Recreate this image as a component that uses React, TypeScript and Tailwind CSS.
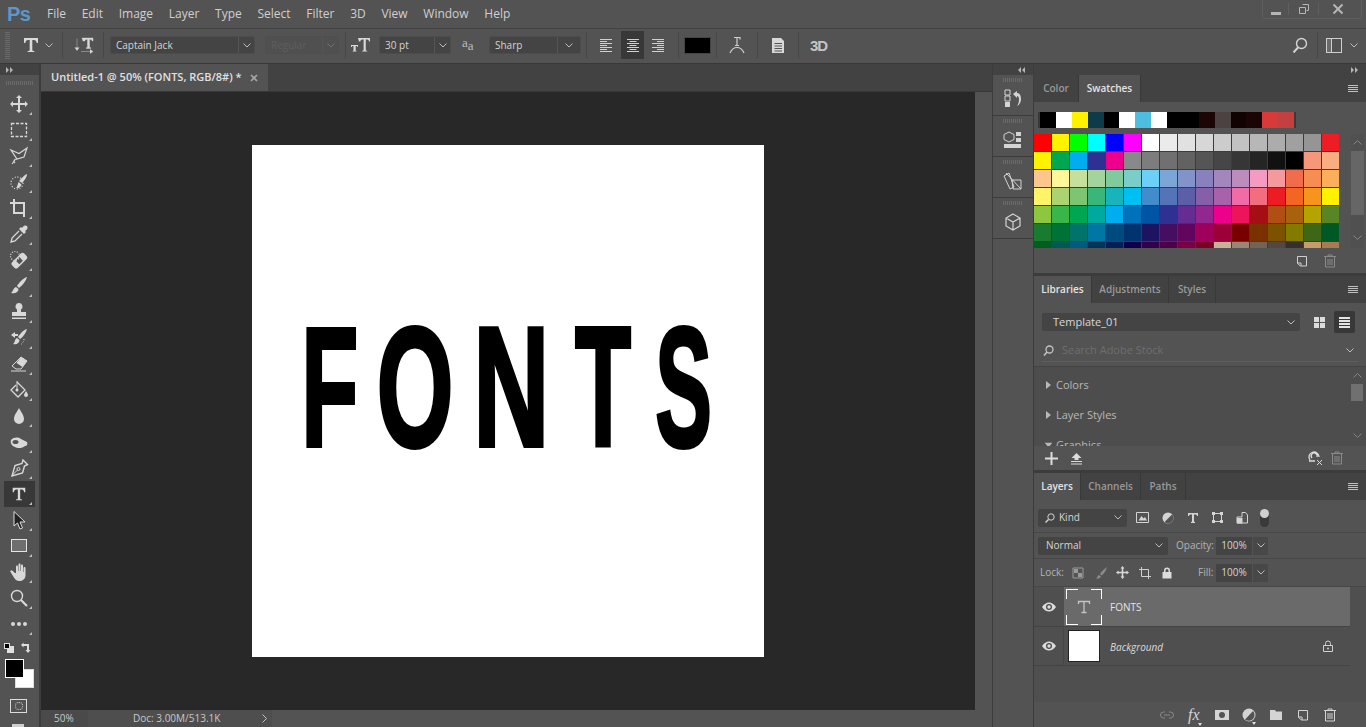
import React from 'react';

const swatchTop = ['#000000','#ffffff','#fff200','#0d3b4a','#000000','#ffffff','#4fbde0','#ffffff','#000000','#000000','#1c0505','#4d4242','#120202','#1a0404','#d83a3a','#c44040'];

const swatches = [
  '#ff0000','#fff200','#00ff00','#00ffff','#0000ff','#ff00ff','#ffffff','#ebebeb','#e1e1e1','#d7d7d7','#cccccc','#c2c2c2','#b7b7b7','#acacac','#a0a0a0','#959595','#ee1c25',
  '#fff200','#00a650','#00aeef','#2e3192','#ec008c','#898989','#7d7d7d','#707070','#626262','#555555','#464646','#363636','#252525','#111111','#000000','#f7977a','#fbad82',
  '#fdc68c','#fff799','#c6df9c','#a4d49d','#81ca9d','#7bcdc9','#6ccff7','#7ca6d8','#8293ca','#8881be','#a286bd','#bc8cbf','#f49bc1','#f5999d','#f16c4d','#f68e54','#fbaf5a',
  '#fff467','#acd372','#7dc473','#39b778','#17b4bb','#00bff3','#438ccb','#5573b7','#5c5fa8','#855fa8','#a763a9','#ef6ca6','#f26d7d','#ed1c24','#f26522','#f7941d','#fff200',
  '#8dc63f','#39b54a','#00a651','#00a99d','#00aeef','#0072bc','#0054a5','#2f3192','#652c91','#91278f','#ec008c','#ed145b','#a50f14','#b14e14','#a8610f','#b5a400','#598527',
  '#197b30','#007236','#00736a','#0076a4','#004a80','#003370','#1d1363','#450e61','#62055f','#9e005c','#9d0039','#790000','#7b3000','#7c5100','#827b00','#3e6617','#005825',
  '#005e20','#005952','#005b7f','#003358','#002056','#0c004b','#30004a','#4b0048','#7a0045','#7a0026','#c7b299','#998675','#736357','#534741','#362f2d','#c69c6d','#a77c50',
];

// canvas letters: each gets its own cell so the widths follow the picture
const canvasLetters = [
  { ch: 'F', cell: 'w-[52px] mr-[23px]', scale: 'scale-x-[0.55]' },
  { ch: 'O', cell: 'w-[72px] mr-[26px]', scale: 'scale-x-[0.58]' },
  { ch: 'N', cell: 'w-[68px] mr-[26px]', scale: 'scale-x-[0.62]' },
  { ch: 'T', cell: 'w-[64px] mr-[22px]', scale: 'scale-x-[0.54]' },
  { ch: 'S', cell: 'w-[54px]', scale: 'scale-x-[0.5]' },
];

const Ico: React.FC<{ s?: number; children: React.ReactNode; className?: string }> = ({ s = 20, children, className = '' }) => (
  <svg width={s} height={s} viewBox={`0 0 ${s} ${s}`} fill="currentColor" className={`shrink-0 ${className}`}>{children}</svg>
);

const Chevron = ({ className = '' }: { className?: string }) => (
  <svg width="8" height="5" viewBox="0 0 8 5" fill="none" stroke="currentColor" className={`shrink-0 text-[#bdbdbd] ${className}`}><path d="M.5.5 4 4 7.5.5" /></svg>
);

const Burger = () => (
  <svg width="10" height="7" viewBox="0 0 10 7" className="text-[#c0c0c0]" fill="currentColor"><path d="M0 0h10v1H0zM0 2h10v1H0zM0 4h10v1H0zM0 6h10v1H0z" /></svg>
);

const Sep = ({ className = '' }: { className?: string }) => <div className={`w-px h-[26px] bg-[#474747] shrink-0 ${className}`} />;

const Arrows = ({ left }: { left?: boolean }) => (
  <svg width="7" height="6" viewBox="0 0 7 6" fill="currentColor" className="text-[#b5b5b5]">
    {left ? <path d="M3 0v6L0 3zM7 0v6L4 3z" /> : <path d="M0 0v6l3-3zM4 0v6l3-3z" />}
  </svg>
);

const Grip = ({ className = '' }: { className?: string }) => (
  <div className={`h-[4px] shrink-0 bg-[repeating-linear-gradient(90deg,#6a6a6a_0_1px,transparent_1px_2px)] ${className}`} />
);

const Trash = ({ className = '' }: { className?: string }) => (
  <Ico s={14} className={className}>
    <path d="M1 2.500h12M5 2V1h4v1M2.500 3v10h9V3M5 5v6M7 5v6M9 5v6" fill="none" stroke="currentColor" />
  </Ico>
);

const NewDoc = () => (
  <Ico s={14}>
    <path d="M2.500 2.500h9v7l-3 2.500h-6zM8 12V9h3.500" fill="none" stroke="currentColor" transform="matrix(-1 0 0 1 14 0)" />
  </Ico>
);

const Eye = () => (
  <Ico s={14}>
    <path d="M0 7c2-3 4.500-4.500 7-4.500S12 4 14 7c-2 3-4.500 4.500-7 4.500S2 10 0 7z" />
    <circle cx="7" cy="7" r="3" fill="#4a4a4a" />
    <circle cx="7" cy="7" r="1.700" />
  </Ico>
);

const SerifT = ({ s = 20 }: { s?: number }) => (
  <svg width={s} height={s} viewBox="0 0 20 20" fill="currentColor" className="shrink-0">
    <path d="M3 3h14v5h-1.300c-.3-2-1-3-3-3H11.300v10c0 .8.6 1 2 1v1H6.700v-1c1.400 0 2-.2 2-1V5H7.300c-2 0-2.700 1-3 3H3z" />
  </svg>
);

const line = { fill: 'none', stroke: 'currentColor' } as const;

const tools: { icon: React.ReactNode; active?: boolean; plain?: boolean }[] = [
  { icon: <path d="M10 1l3 3h-2v5h5V7l3 3-3 3v-2h-5v5h2l-3 3-3-3h2v-5H4v2l-3-3 3-3v2h5V4H7z" /> },
  { icon: <rect x="2.500" y="3.500" width="15" height="13" {...line} strokeDasharray="3 1.500" strokeWidth="1.300" /> },
  { icon: <path d="M2 4l8 3.500L18 2l-3 9-7 2zM8 13c-3 0-4 2-2 4M6 14l-3 4" {...line} strokeWidth="1.200" /> },
  { icon: <><circle cx="8" cy="11" r="6" {...line} strokeDasharray="1 1.800" strokeWidth="1.300" /><path d="M18 2c0 3-3 7-5 9l-3-2c2-2 5-6 8-7zM9.500 10l3 2.500c-1 3-3 4-5.500 3.500 1.500-1 1.500-4 2.500-6z" /></> },
  { icon: <><path d="M5 1v14h11M1 5h14v14" {...line} strokeWidth="2" /></> },
  { icon: <><path d="M16 1.500a2.300 2.300 0 0 1 2.500 2.500c0 1-1 2-2.500 3l1 1-2 2-5-5 2-2 1 1c1-1.500 2-2.500 3-2.500z" /><path d="M10 7l-7 7-1 4 4-1 7-7" {...line} strokeWidth="1.300" /></> },
  { icon: <><g transform="rotate(-45 10 11)"><rect x="2" y="7" width="17" height="8" rx="2.500" /><rect x="8" y="8.500" width="5" height="5" fill="#535353" /></g><circle cx="6" cy="6" r="4.500" {...line} strokeDasharray="1 1.500" strokeWidth="1.200" /></> },
  { icon: <path d="M18 1c-1 4-5 9-8 11l-2-2c2-3 6-8 10-9zM7 11l2.500 2c0 3-3 5-7.500 4 2-1 2-5 5-6z" /> },
  { icon: <path d="M10 1a3.500 3.500 0 0 1 2 6.400V10h5v4H3v-4h5V7.400A3.500 3.500 0 0 1 10 1zM3 15.500h14V17H3z" /> },
  { icon: <><path d="M18 1c-1 4-4 8-7 10l-2-2c2-3 5-7 9-8zM8 10l2.500 2c0 3-3 5-6.500 4 2-1 1.500-5 4-6z" /><path d="M2 7l4-3v2h3v2H6v2z" /><path d="M15 11c0 3-2 5-4 6" {...line} strokeDasharray="1 1.500" /></> },
  { icon: <><path d="M12 3l6 4-6 8H7l-4-3z" {...line} /><path d="M12 3l6 4-4.500 6L7.500 9z" /><path d="M2 17h15" {...line} /></> },
  { icon: <><path d="M8 2l8 8-7 7-7-7 5-5" {...line} strokeWidth="1.300" /><path d="M8 9V1" {...line} /><path d="M17 11c1.200 2 2 3 2 4a2 2 0 0 1-4 0c0-1 1-2 2-4z" /><circle cx="8" cy="10" r="1.500" /></> },
  { icon: <path d="M10 2c2 4 5 7 5 11a5 5 0 0 1-10 0c0-4 3-7 5-11z" /> },
  { icon: <><path d="M2 8c3-3 7-3 10-1l6 3c1 2 0 4-2 4-2 2-7 3-10 1-3-1-5-4-4-7z" /><ellipse cx="6.500" cy="10" rx="3" ry="2" fill="#535353" /></> },
  { icon: <><path d="M14 2l4.500 4.500-3 1.500-2 7-10.500 3 3-10.500 7-2z" {...line} strokeWidth="1.400" /><path d="M3 17.500l5.500-5.500" {...line} /><circle cx="9.500" cy="11" r="1.500" {...line} /></> },
  { icon: <SerifT s={18} />, active: true, plain: true },
  { icon: <path d="M5 1.500L16 12h-5l2.500 6-2.500 1-2.500-6L5 16z" fill="#222" stroke="#dcdcdc" /> },
  { icon: <rect x="2.500" y="3.500" width="15" height="12" fill="#6e6e6e" stroke="#e4e4e4" /> },
  { icon: <path d="M7 4.500c0-1.500 2-1.500 2 0V9h.500V2.500c0-1.500 2-1.500 2 0V9h.500V3.500c0-1.500 2-1.500 2 0V10h.500V6c0-1.500 2-1.500 2 0v7c0 4-3 6-6 6s-5-2-6.500-5L1.500 10c-.8-1.500 1-2.500 2-1.300L6 11h1z" /> },
  { icon: <><circle cx="8" cy="8" r="5.500" {...line} strokeWidth="1.400" /><path d="M12 12l6 6" {...line} strokeWidth="2.200" /></> },
  { icon: <><circle cx="4" cy="10" r="2" /><circle cx="10" cy="10" r="2" /><circle cx="16" cy="10" r="2" /></> },
];

const Tool = ({ icon, active, plain }: { icon: React.ReactNode; active?: boolean; plain?: boolean }) => (
  <div className={`relative mx-[4px] w-[31px] h-[26px] flex items-center justify-center pr-[2px] text-[#d8d8d8] ${active ? 'bg-[#383838]' : ''}`}>
    {plain ? icon : <Ico>{icon}</Ico>}
    <div className="absolute right-[3px] bottom-[2px] w-0 h-0 border-l-[3px] border-l-transparent border-b-[3px] border-b-[#c0c0c0]" />
  </div>
);

const Select = ({ label, w, chevW = 16, disabled, text = 'text-[#d4d4d4]' }: { label: string; w: number; chevW?: number; disabled?: boolean; text?: string }) => (
  <div className={`flex h-[18px] items-center rounded-[2px] border ${disabled ? 'border-[#4f4f4f] bg-[#505050]' : 'border-[#4c4c4c] bg-[#444444]'} shrink-0`} style={{ width: w }}>
    <span className={`flex-1 pl-[5px] text-[10px] leading-[16px] whitespace-nowrap ${text}`}>{label}</span>
    <div className="h-full flex items-center justify-center border-l border-[#555555]" style={{ width: chevW }}>
      <Chevron className={disabled ? 'opacity-30' : ''} />
    </div>
  </div>
);

const PanelTabs = ({ tabs, active }: { tabs: { name: string; w: number }[]; active: string }) => (
  <div className="h-[27px] flex bg-[#424242] shrink-0">
    {tabs.map((t) => (
      <div
        key={t.name}
        className={`flex items-center justify-center border-r border-[#383838] text-[10px] font-semibold ${t.name === active ? 'bg-[#535353] text-[#e4e4e4]' : 'text-[#999999]'}`}
        style={{ width: t.w }}
      >
        {t.name}
      </div>
    ))}
    <div className="ml-auto mr-[8px] self-center"><Burger /></div>
  </div>
);

const ScrollArrow = ({ up }: { up?: boolean }) => (
  <svg width="9" height="5" viewBox="0 0 9 5" fill="none" stroke="currentColor" className={`text-[#858585] ${up ? 'rotate-180' : ''}`}><path d="M.5.5l4 4 4-4" /></svg>
);

const ListRow = ({ label, open }: { label: string; open?: boolean }) => (
  <div className="h-[30px] flex items-center pl-[12px] gap-[5px] text-[#b8b8b8] text-[11px] shrink-0">
    <svg width="5" height="8" viewBox="0 0 5 8" fill="currentColor" className={open ? 'rotate-90' : ''}><path d="M0 0l5 4-5 4z" /></svg>
    {label}
  </div>
);

const Dropped = () => <div className="absolute -bottom-[3px] right-0 w-0 h-0 border-x-[2px] border-x-transparent border-t-[3px] border-t-[#e0e0e0]" />;

export default function App() {
  return (
    <div className="w-[1366px] h-[727px] overflow-hidden flex flex-col bg-[#535353] font-['Open_Sans','Noto_Sans',sans-serif] text-[#d4d4d4]">
      {/* Menu bar */}
      <div className="h-[29px] shrink-0 flex items-start border-b border-[#424242]">
        <div className="w-[47px] pl-[7px] pt-[2px] text-[20px] leading-[24px] font-bold text-[#5d97c8] font-['Liberation_Sans',sans-serif] tracking-[-0.5px]">Ps</div>
        <div className="flex gap-[15.7px] h-[28px] items-center text-[12px] text-[#d0d0d0]">
          {['File', 'Edit', 'Image', 'Layer', 'Type', 'Select', 'Filter', '3D', 'View', 'Window', 'Help'].map((m) => <span key={m}>{m}</span>)}
        </div>
        <div className="ml-auto mr-[4px] w-[100px] h-[19px] flex items-center border-b border-l border-r border-[#5f5f5f] rounded-b-[2px] text-[#b5b5b5]">
          <div className="w-[25px] flex justify-center pt-[3px]"><div className="w-[10px] h-[3px] bg-[#b5b5b5] mt-[6px]" /></div>
          <div className="w-[30px] flex justify-center border-l border-[#5f5f5f]">
            <Ico s={12}><path d="M4.500 1.500h6v6h-2M1.500 4.500h6v6h-6z" fill="none" stroke="currentColor" /></Ico>
          </div>
          <div className="flex-1 flex justify-center pr-[5px] border-l border-[#5f5f5f]">
            <Ico s={12}><path d="M1.500 1.500l9 9M10.500 1.500l-9 9" fill="none" stroke="currentColor" strokeWidth="2" /></Ico>
          </div>
        </div>
      </div>

      {/* Options bar */}
      <div className="h-[35px] shrink-0 flex items-center pb-[2px] border-b border-[#383838] text-[#d4d4d4]">
        <div className="ml-[5px] w-[5px] h-[27px] bg-[repeating-linear-gradient(0deg,#6a6a6a_0_1px,transparent_1px_2px)]" />
        <div className="ml-[11px] text-[#dadada]"><SerifT /></div>
        <Chevron className="ml-[4px]" />
        <Sep className="ml-[9px]" />
        <div className="ml-[11px] text-[#d8d8d8]">
          <Ico><path d="M8 3h11v3h-.8c-.2-1-.7-1.500-1.700-1.500h-1V12c0 .5.4.7 1.200.7v.8h-4.400v-.8c.8 0 1.200-.2 1.200-.7V4.500h-1c-1 0-1.500.5-1.700 1.500H9zM3 3.500V15M.8 12.500L3 15.500l2.200-3M7 16.500h11M16 14.500l3 2-3 2" fill="currentColor" stroke="currentColor" strokeWidth=".4" /></Ico>
        </div>
        <Sep className="ml-[9px]" />
        <div className="ml-[6px]"><Select label="Captain Jack" w={145} /></div>
        <div className="ml-[10px]"><Select label="Regular" w={74} disabled text="text-[#5e5e5e]" /></div>
        <Sep className="ml-[6px]" />
        <div className="ml-[4px] text-[#d8d8d8] w-[21px]">
          <Ico s={21}><path d="M8 3h12v3.500h-.9c-.2-1.300-.8-2-2-2h-1.300V15c0 .6.5.8 1.400.8v.7h-5v-.7c.9 0 1.400-.2 1.400-.8V4.500h-1.300c-1.200 0-1.800.7-2 2H9zM1 10h7v2h-.6c-.1-.7-.4-1.100-1.100-1.100h-.6V15.500c0 .3.3.4.8.4v.6H2.700v-.6c.5 0 .8-.1.8-.4V10.900h-.6c-.7 0-1 .4-1.100 1.100H1z" /></Ico>
        </div>
        <div className="ml-[8px]"><Select label="30 pt" w={72} /></div>
        <div className="ml-[11px] w-[18px] text-[#bbbbbb] text-[13px] leading-none font-['Liberation_Serif',serif]"><span className="relative -top-[3px]">a</span><span>a</span></div>
        <div className="ml-[9px]"><Select label="Sharp" w={92} chevW={23} /></div>
        <Sep className="ml-[5px]" />
        <div className="ml-[12px] w-[14px] text-[#d0d0d0]"><Ico s={14}><path d="M1 1h12v1H1zM1 3h7v1H1zM1 5h12v1H1zM1 7h7v1H1zM1 9h12v1H1zM1 11h7v1H1zM1 13h12v1H1z" /></Ico></div>
        <div className="ml-[8px] w-[23px] h-[28px] bg-[#383838] flex items-center justify-center text-[#d0d0d0]"><Ico s={14}><path d="M1 1h12v1H1zM3.500 3h7v1h-7zM1 5h12v1H1zM3.500 7h7v1h-7zM1 9h12v1H1zM3.500 11h7v1h-7zM1 13h12v1H1z" /></Ico></div>
        <div className="ml-[7px] w-[14px] text-[#d0d0d0]"><Ico s={14}><path d="M1 1h12v1H1zM6 3h7v1H6zM1 5h12v1H1zM6 7h7v1H6zM1 9h12v1H1zM6 11h7v1H6zM1 13h12v1H1z" /></Ico></div>
        <Sep className="ml-[13px]" />
        <div className="ml-[5px] w-[27px] h-[17px] bg-black border border-[#444444]" />
        <Sep className="ml-[5px]" />
        <div className="ml-[10px] text-[#cfcfcf]"><Ico><path d="M7 2.500h6v2M10 2.500v8M8 10.500h4M3 18c1.500-3.500 4-5.500 7-5.500s5.500 2 7 5.500" fill="none" stroke="currentColor" strokeWidth="1.200" /></Ico></div>
        <Sep className="ml-[10px]" />
        <div className="ml-[12px] text-[#d8d8d8]"><Ico s={16}><path d="M2 1h9l3 3v12H2zM4.500 6v1H12V6zM4.500 8.500v1H12v-1zM4.500 11v1H12v-1zM4.500 13.500v1H12v-1z" fillRule="evenodd" /></Ico></div>
        <Sep className="ml-[12px]" />
        <div className="ml-[11px] w-[20px] text-[15px] leading-none font-bold text-[#c4c4c4] font-['Liberation_Sans',sans-serif] tracking-[-1px]">3D</div>
        <div className="ml-auto text-[#d4d4d4]"><Ico s={16}><circle cx="9.500" cy="6.500" r="5" fill="none" stroke="currentColor" strokeWidth="1.400" /><path d="M6 10.500l-4.500 5" fill="none" stroke="currentColor" strokeWidth="2" /></Ico></div>
        <Sep className="ml-[9px]" />
        <div className="ml-[8px] w-[16px] h-[15px] border border-[#cfcfcf] flex"><div className="w-[5px] h-full border-r border-[#cfcfcf] bg-[#6a6a6a]" /></div>
        <Chevron className="ml-[8px] mr-[8px]" />
      </div>

      {/* Main */}
      <div className="flex-1 min-h-0 flex">
        {/* Tools */}
        <div className="w-[41px] shrink-0 flex flex-col overflow-hidden border-r-2 border-[#3c3c3c]">
          <div className="h-[11px] bg-[#424242] flex items-center pl-[6px] shrink-0"><Arrows /></div>
          <Grip className="mt-[6px] mx-[6px]" />
          <div className="mt-[6px] flex flex-col shrink-0">
            {tools.map((t, i) => <Tool key={i} {...t} />)}
          </div>
          <div className="mt-[4px] h-[14px] flex items-center justify-between pl-[4px] pr-[7px] shrink-0">
            <div className="relative w-[10px] h-[10px]">
              <div className="absolute right-0 bottom-0 w-[7px] h-[7px] bg-[#e0e0e0]" />
              <div className="absolute left-0 top-0 w-[6px] h-[6px] bg-black border border-[#e0e0e0]" />
            </div>
            <Ico s={12} className="text-[#dcdcdc]"><path d="M1 3l2.500-2.500V2H9v6h1.500L8 11 5.500 8H7V4H3.500v1.500z" /></Ico>
          </div>
          <div className="relative h-[30px] mt-[3px] shrink-0">
            <div className="absolute left-[15px] top-[11px] w-[19px] h-[19px] bg-white border border-[#dddddd]" />
            <div className="absolute left-[5px] top-[1px] w-[19px] h-[19px] bg-black border border-white" />
          </div>
          <div className="mt-[11px] mx-[10px] w-[17px] h-[14px] border border-[#dcdcdc] flex items-center justify-center shrink-0">
            <div className="w-[8px] h-[8px] rounded-full border border-dotted border-[#dcdcdc]" />
          </div>
          <div className="mt-[11px] ml-[12px] w-[12px] h-[6px] bg-[#cfcfcf] shrink-0" />
        </div>

        {/* Document */}
        <div className="flex-1 min-w-0 flex flex-col bg-[#535353]">
          <div className="h-[28px] shrink-0 bg-[#424242] flex border-b border-[#383838]">
            <div className="w-[227px] bg-[#535353] flex items-center pl-[10px] gap-[8px]">
              <span className="text-[11px] font-semibold text-[#e0e0e0] whitespace-nowrap">Untitled-1 @ 50% (FONTS, RGB/8#) *</span>
              <Ico s={8} className="text-[#a8a8a8]"><path d="M1 1l6 6M7 1L1 7" fill="none" stroke="currentColor" strokeWidth="1.600" /></Ico>
            </div>
          </div>
          <div className="flex-1 min-h-0 flex">
            <div className="w-[934px] shrink-0 bg-[#282828] flex items-center justify-center">
              <div className="w-[512px] h-[512px] bg-white flex items-center pl-[52px] pb-[28px] overflow-hidden">
                {canvasLetters.map((l) => (
                  <div key={l.ch} className={`flex justify-center shrink-0 ${l.cell}`}>
                    <span className={`block shrink-0 text-[170px] leading-none font-bold text-black font-['Liberation_Sans',sans-serif] [-webkit-text-stroke:4px_black] ${l.scale}`}>{l.ch}</span>
                  </div>
                ))}
              </div>
            </div>
            <div className="flex-1 bg-[#535353]" />
          </div>
          <div className="h-[17px] shrink-0 flex items-center text-[10px] text-[#c8c8c8]">
            <div className="w-[47px] h-full bg-[#4a4a4a] pl-[13px] flex items-center">50%</div>
            <div className="w-[184px] h-full bg-[#4e4e4e] flex items-center">
              <span className="ml-[45px] whitespace-nowrap">Doc: 3.00M/513.1K</span>
              <svg width="5" height="9" viewBox="0 0 5 9" fill="none" stroke="currentColor" className="ml-auto mr-[5px] text-[#c0c0c0]"><path d="M.5.5l4 4-4 4" /></svg>
            </div>
          </div>
        </div>

        {/* Dock */}
        <div className="w-[42px] shrink-0 flex flex-col border-x border-[#3c3c3c]">
          <div className="h-[11px] bg-[#424242] flex items-center justify-end pr-[8px] shrink-0"><Arrows left /></div>
          {[
            <><path d="M2 1h5v5H2zM2 7h5v5H2z" fill="none" stroke="currentColor" /><path d="M2 13h5v5H2z" /><path d="M10 5l4-3v2c3 0 4 3 4 6 0 3-1.500 6-4 7 1.500-2 2-4 2-7 0-2-1-3-2-3v2z" /></>,
            <><path d="M6 2l5 2.500v5L6 12 1 9.500v-5z" fill="none" stroke="currentColor" /><path d="M13 2h5v4h-5zM13 8h5v4h-5zM1 14h17v4H1z" /></>,
            <><path d="M1 5l5-3 5 14-4 2z" fill="none" stroke="currentColor" /><path d="M9 9h9v9H10zM3 2l15 16" fill="none" stroke="currentColor" /></>,
            <path d="M10 2l7 4v8l-7 4-7-4V6zM3 6l7 4 7-4M10 10v8" fill="none" stroke="currentColor" strokeWidth="1.200" />,
          ].map((d, i) => (
            <div key={i} className="h-[41px] shrink-0 border-b border-[#3c3c3c] flex flex-col items-center text-[#d4d4d4]">
              <Grip className="w-[20px] mt-[3px] mb-[7px]" />
              <Ico>{d}</Ico>
            </div>
          ))}
        </div>

        {/* Panels */}
        <div className="w-[332px] shrink-0 flex flex-col">
          <div className="h-[11px] bg-[#424242] flex items-center justify-end pr-[8px] shrink-0"><Arrows /></div>

          {/* Swatches */}
          <PanelTabs tabs={[{ name: 'Color', w: 45 }, { name: 'Swatches', w: 62 }]} active="Swatches" />
          <div className="h-[171px] shrink-0 flex flex-col">
            <div className="mt-[10px] ml-[4px] w-[258px] h-[16px] bg-[#3a3a3a] flex px-[2px] shrink-0">
              {swatchTop.map((c, i) => <div key={i} className="w-[16px] h-[16px]" style={{ background: c }} />)}
            </div>
            <div className="mt-[6px] h-[114px] flex shrink-0">
              <div className="w-[305px] h-[114px] overflow-hidden shrink-0 bg-[#3c3c3c]">
                <div className="grid grid-cols-[repeat(17,17px)] auto-rows-[17px] gap-px">
                  {swatches.map((c, i) => <div key={i} style={{ background: c }} />)}
                </div>
              </div>
              <div className="ml-[12px] w-[13px] flex flex-col items-center bg-[#505050]">
                <div className="h-[17px] flex items-center"><ScrollArrow up /></div>
                <div className="w-full h-[64px] bg-[#666666]" />
                <div className="flex-1 flex items-end pb-[8px]"><ScrollArrow /></div>
              </div>
            </div>
            <div className="flex-1 flex items-center justify-end pr-[29px] gap-[14px] text-[#d0d0d0]">
              <NewDoc />
              <Trash className="text-[#8a8a8a]" />
            </div>
          </div>
          <div className="h-[3px] bg-[#3c3c3c] shrink-0" />

          {/* Libraries */}
          <PanelTabs tabs={[{ name: 'Libraries', w: 58 }, { name: 'Adjustments', w: 77 }, { name: 'Styles', w: 47 }]} active="Libraries" />
          <div className="h-[64px] shrink-0 flex flex-col border-b border-[#444444]">
            <div className="mt-[8px] h-[22px] flex items-center pl-[8px]">
              <div className="w-[258px] h-[18px] bg-[#444444] rounded-[2px] flex items-center pl-[11px] pr-[5px] text-[11px] text-[#d8d8d8]">
                Template_01
                <Chevron className="ml-auto" />
              </div>
              <div className="ml-[14px] w-[11px] h-[11px] grid grid-cols-2 gap-px">
                <div className="bg-[#dcdcdc]" /><div className="bg-[#dcdcdc]" /><div className="bg-[#dcdcdc]" /><div className="bg-[#dcdcdc]" />
              </div>
              <div className="ml-[9px] w-[21px] h-[22px] bg-[#383838] rounded-[2px] flex items-center justify-center">
                <Ico s={11} className="text-[#e4e4e4]"><path d="M0 0h11v2H0zM0 3h11v2H0zM0 6h11v2H0zM0 9h11v2H0z" /></Ico>
              </div>
            </div>
            <div className="mx-[8px] mt-[7px] h-[22px] flex items-center border-b border-[#5e5e5e]">
              <Ico s={11} className="ml-[1px] text-[#c4c4c4]"><circle cx="6.500" cy="4.500" r="3.500" fill="none" stroke="currentColor" strokeWidth="1.300" /><path d="M4 7l-3 3.500" fill="none" stroke="currentColor" strokeWidth="1.600" /></Ico>
              <span className="ml-[8px] text-[11px] text-[#6e6e6e]">Search Adobe Stock</span>
              <Chevron className="ml-auto mr-[4px]" />
            </div>
          </div>
          <div className="h-[79px] shrink-0 flex bg-[#4d4d4d] overflow-hidden">
            <div className="flex-1 flex flex-col pt-[3px]">
              <ListRow label="Colors" />
              <ListRow label="Layer Styles" />
              <ListRow label="Graphics" open />
            </div>
            <div className="w-[14px] mr-[2px] flex flex-col items-center">
              <div className="h-[17px] flex items-center"><ScrollArrow up /></div>
              <div className="w-[12px] h-[17px] bg-[#707070]" />
              <div className="flex-1 flex items-end pb-[8px]"><ScrollArrow /></div>
            </div>
          </div>
          <div className="h-[24px] shrink-0 flex items-center pl-[11px] pr-[22px] text-[#dcdcdc]">
            <Ico s={13}><path d="M5.500 0h2v5.500H13v2H7.500V13h-2V7.500H0v-2h5.500z" /></Ico>
            <Ico s={13} className="ml-[12px]"><path d="M6.500 1l5 5H8.500v2h-4V6H1.500zM1 9h11v1H1zM1 11.500h11v1H1z" /></Ico>
            <Ico s={16} className="ml-auto"><path d="M3 10a5 5 0 1 1 9-3M5 8a3 3 0 1 1 5-1M2 11h6" fill="none" stroke="currentColor" strokeWidth="1.300" /><path d="M10 10l5 5M15 10l-5 5" fill="none" stroke="currentColor" /></Ico>
            <Trash className="ml-[7px] text-[#8a8a8a]" />
          </div>
          <div className="h-[3px] bg-[#3c3c3c] shrink-0" />

          {/* Layers */}
          <PanelTabs tabs={[{ name: 'Layers', w: 47 }, { name: 'Channels', w: 60 }, { name: 'Paths', w: 45 }]} active="Layers" />
          <div className="h-[33px] shrink-0 flex items-center pl-[4px] pt-[3px] border-b border-[#474747] text-[#d4d4d4]">
            <div className="w-[89px] h-[18px] bg-[#444444] rounded-[2px] flex items-center pl-[7px] pr-[5px] text-[10px]">
              <Ico s={10} className="mr-[4px]"><circle cx="6" cy="4" r="3.200" fill="none" stroke="currentColor" /><path d="M3.500 6.500L.5 9.500" fill="none" stroke="currentColor" strokeWidth="1.400" /></Ico>
              Kind
              <Chevron className="ml-auto" />
            </div>
            <Ico s={13} className="ml-[9px]"><path d="M.5 1.500h12v10H.5z" fill="none" stroke="currentColor" /><path d="M2.500 9.500L5.500 5l2 2.500 1.500-1.500 2 3.500z" /></Ico>
            <Ico s={12} className="ml-[13px]"><circle cx="6" cy="6" r="5.500" /><path d="M2.500 10L10 2.500A5 5 0 0 1 10 9.500 5 5 0 0 1 2.500 10z" fill="#535353" /></Ico>
            <Ico s={12} className="ml-[13px]"><path d="M1 1h10v3h-1c-.2-1-.5-1.500-1.500-1.500H7V9.500c0 .3.300.4 1 .4v1H4v-1c.7 0 1-.1 1-.4V2.500H3.500C2.500 2.500 2.200 3 2 4H1z" /></Ico>
            <Ico s={13} className="ml-[12px]"><path d="M2.500 2.500h8v8h-8z" fill="none" stroke="currentColor" /><path d="M1 1h3v3H1zM9 1h3v3H9zM1 9h3v3H1zM9 9h3v3H9z" /></Ico>
            <Ico s={12} className="ml-[12px]"><path d="M6 .5h3.500L11.500 3v8H1V5h5z" fill="none" stroke="currentColor" /><path d="M1 6h5.500v5.500H1z" /></Ico>
            <div className="ml-[12px] w-[9px] h-[18px] rounded-full bg-[#3a3a3a] flex justify-center"><div className="w-[9px] h-[9px] rounded-full bg-[#d0d0d0]" /></div>
          </div>
          <div className="h-[26px] shrink-0 flex items-center pl-[4px] border-b border-[#474747] text-[10px]">
            <div className="w-[130px] h-[18px] bg-[#444444] rounded-[2px] flex items-center pl-[8px] pr-[5px]">
              Normal
              <Chevron className="ml-auto" />
            </div>
            <span className="ml-[8px] w-[36px] text-[#b4b4b4]">Opacity:</span>
            <div className="ml-[4px] w-[36px] h-[18px] bg-[#444444] flex items-center justify-center">100%</div>
            <div className="ml-px w-[15px] h-[18px] bg-[#484848] flex items-center justify-center"><Chevron /></div>
          </div>
          <div className="h-[28px] shrink-0 flex items-center pl-[6px] text-[10px] text-[#b4b4b4] border-b border-[#474747]">
            <span className="w-[27px]">Lock:</span>
            <Ico s={12} className="ml-[5px] text-[#9a9a9a]"><path d="M1 1h10v10H1z" fill="none" stroke="currentColor" /><path d="M2 2h4v4H2zM6 6h4v4H6z" /></Ico>
            <Ico s={13} className="ml-[11px] text-[#8a8a8a]"><path d="M12 1C9 3 6 6 5 8l1.500 1.500C9 7.500 11 5 12 1zM4 9l2 1.500C6 12 3 13 1 12.500c1.500-.5 1-3 3-3.500z" /></Ico>
            <Ico s={13} className="ml-[8px] text-[#d8d8d8]"><path d="M6.500 0l2 2.500H7.300v3.200h3.200V4.500L13 6.500l-2.500 2V7.300H7.300v3.200h1.200L6.500 13l-2-2.500h1.200V7.300H2.500v1.200L0 6.500l2.500-2v1.200h3.200V2.500H4.500z" /></Ico>
            <Ico s={14} className="ml-[9px] text-[#d0d0d0]"><path d="M3.500 1v9.500H13M1 3.500h9.500V13" fill="none" stroke="currentColor" /></Ico>
            <Ico s={12} className="ml-[9px] text-[#dcdcdc]"><path d="M3 5V3.500a3 3 0 0 1 6 0V5h1.500v6.500h-9V5zM4.500 5h3V3.500a1.500 1.500 0 0 0-3 0z" /></Ico>
            <span className="ml-[25px] w-[14px] text-[#b4b4b4]">Fill:</span>
            <div className="ml-[4px] w-[36px] h-[18px] bg-[#444444] flex items-center justify-center text-[#d4d4d4]">100%</div>
            <div className="ml-px w-[15px] h-[18px] bg-[#484848] flex items-center justify-center"><Chevron /></div>
          </div>
          <div className="flex-1 min-h-0 flex flex-col bg-[#4f4f4f]">
            <div className="h-[40px] shrink-0 flex border-b border-[#444444] mr-[16px]">
              <div className="w-[30px] flex items-center justify-center text-[#dcdcdc]"><Eye /></div>
              <div className="flex-1 bg-[#6a6a6a] flex items-center">
                <div className="relative ml-[2px] w-[36px] h-[36px] flex items-center justify-center text-[#c4c4c4]">
                  <Ico><path d="M4.500 7V4.500h11V7M10 4.500v11M7.500 15.500h5" fill="none" stroke="currentColor" strokeWidth="1.300" /></Ico>
                  <div className="absolute left-0 top-0 w-[12px] h-[1px] bg-white" />
                  <div className="absolute right-0 top-0 w-[11px] h-[1px] bg-white" />
                  <div className="absolute left-0 bottom-0 w-[12px] h-[1px] bg-white" />
                  <div className="absolute right-0 bottom-0 w-[11px] h-[1px] bg-white" />
                  <div className="absolute left-0 top-0 w-[1px] h-[10px] bg-white" />
                  <div className="absolute right-0 top-0 w-[1px] h-[10px] bg-white" />
                  <div className="absolute left-0 bottom-0 w-[1px] h-[10px] bg-white" />
                  <div className="absolute right-0 bottom-0 w-[1px] h-[10px] bg-white" />
                </div>
                <span className="ml-[8px] mt-[2px] text-[10px] text-[#e4e4e4]">FONTS</span>
              </div>
            </div>
            <div className="h-[39px] shrink-0 flex border-b border-[#444444] mr-[16px]">
              <div className="w-[30px] flex items-center justify-center text-[#dcdcdc] border-r border-[#474747]"><Eye /></div>
              <div className="flex-1 flex items-center">
                <div className="ml-[4px] w-[32px] h-[32px] bg-white border border-[#222222]" />
                <span className="ml-[10px] mt-[2px] text-[10px] italic text-[#dcdcdc]">Background</span>
                <Ico s={12} className="ml-auto mr-[16px] text-[#d0d0d0]"><path d="M1.500 5.500h9v6h-9zM3.500 5.500V3.500a2.500 2.500 0 0 1 5 0v2" fill="none" stroke="currentColor" /><circle cx="6" cy="8.500" r="1" /></Ico>
              </div>
            </div>
          </div>
          <div className="h-[25px] shrink-0 flex items-center justify-end pr-[29px] gap-[13px] text-[#d4d4d4]">
            <Ico s={14} className="text-[#8a8a8a]"><path d="M5 4H3.500a3 3 0 0 0 0 6H5M9 4h1.500a3 3 0 0 1 0 6H9M4 7h6" fill="none" stroke="currentColor" /></Ico>
            <span className="relative text-[16px] leading-none italic font-['Liberation_Serif',serif] w-[14px] ml-[1px]">fx<Dropped /></span>
            <Ico s={14}><path d="M0 2h14v10H0z" /><circle cx="7" cy="7" r="3" fill="#535353" /></Ico>
            <div className="relative">
              <Ico s={14}><circle cx="7" cy="7" r="6.500" /><path d="M3 11.500L11 3a6 6 0 0 1 0 8 6 6 0 0 1-8 .5z" fill="#535353" /></Ico>
              <Dropped />
            </div>
            <Ico s={14}><path d="M1 2h5l1 1.500h6V12H1z" /></Ico>
            <NewDoc />
            <Trash />
          </div>
        </div>
      </div>
    </div>
  );
}
